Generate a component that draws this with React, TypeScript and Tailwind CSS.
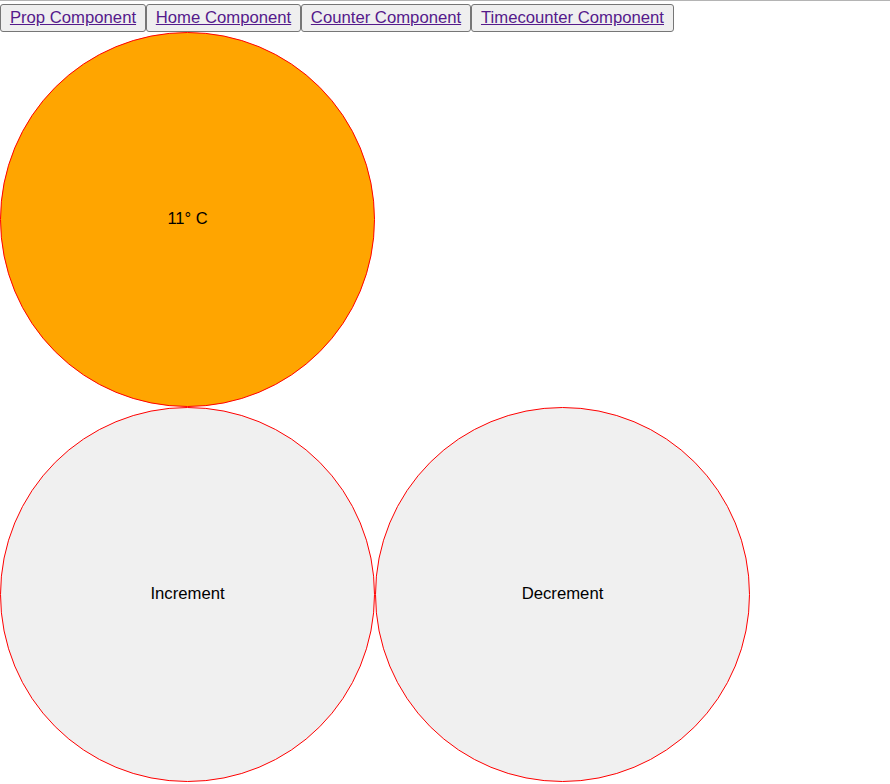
import React from "react";

const font = { fontFamily: '"Liberation Sans", Arial, sans-serif' };

export default function App() {
  return (
    <div className="w-[890px] h-[784px] bg-white overflow-hidden" style={font}>
      <div className="h-[1px] bg-[#b4b4b4]" />
      <div className="flex mt-[3px]">
        <button className="w-[146px] h-[28px] flex items-center justify-center border border-[#767676] rounded-[3px] bg-[#efefef] text-[16.7px] text-[#551a8b] underline">
          Prop Component
        </button>
        <button className="w-[155px] h-[28px] flex items-center justify-center border border-[#767676] rounded-[3px] bg-[#efefef] text-[16.7px] text-[#551a8b] underline">
          Home Component
        </button>
        <button className="w-[170px] h-[28px] flex items-center justify-center border border-[#767676] rounded-[3px] bg-[#efefef] text-[16.7px] text-[#551a8b] underline">
          Counter Component
        </button>
        <button className="w-[203px] h-[28px] flex items-center justify-center border border-[#767676] rounded-[3px] bg-[#efefef] text-[16.7px] text-[#551a8b] underline">
          Timecounter Component
        </button>
      </div>
      <div className="w-[375px] h-[375px] rounded-full border border-[#ff0000] bg-[#ffa500] flex items-center justify-center text-[16.5px] text-black pb-[2px]">
        11° C
      </div>
      <div className="flex">
        <div className="w-[375px] h-[375px] rounded-full border border-[#ff0000] bg-[#f0f0f0] flex items-center justify-center text-[16.7px] text-black pb-[2px]">
          Increment
        </div>
        <div className="w-[375px] h-[375px] rounded-full border border-[#ff0000] bg-[#f0f0f0] flex items-center justify-center text-[16.7px] text-black pb-[2px]">
          Decrement
        </div>
      </div>
    </div>
  );
}
